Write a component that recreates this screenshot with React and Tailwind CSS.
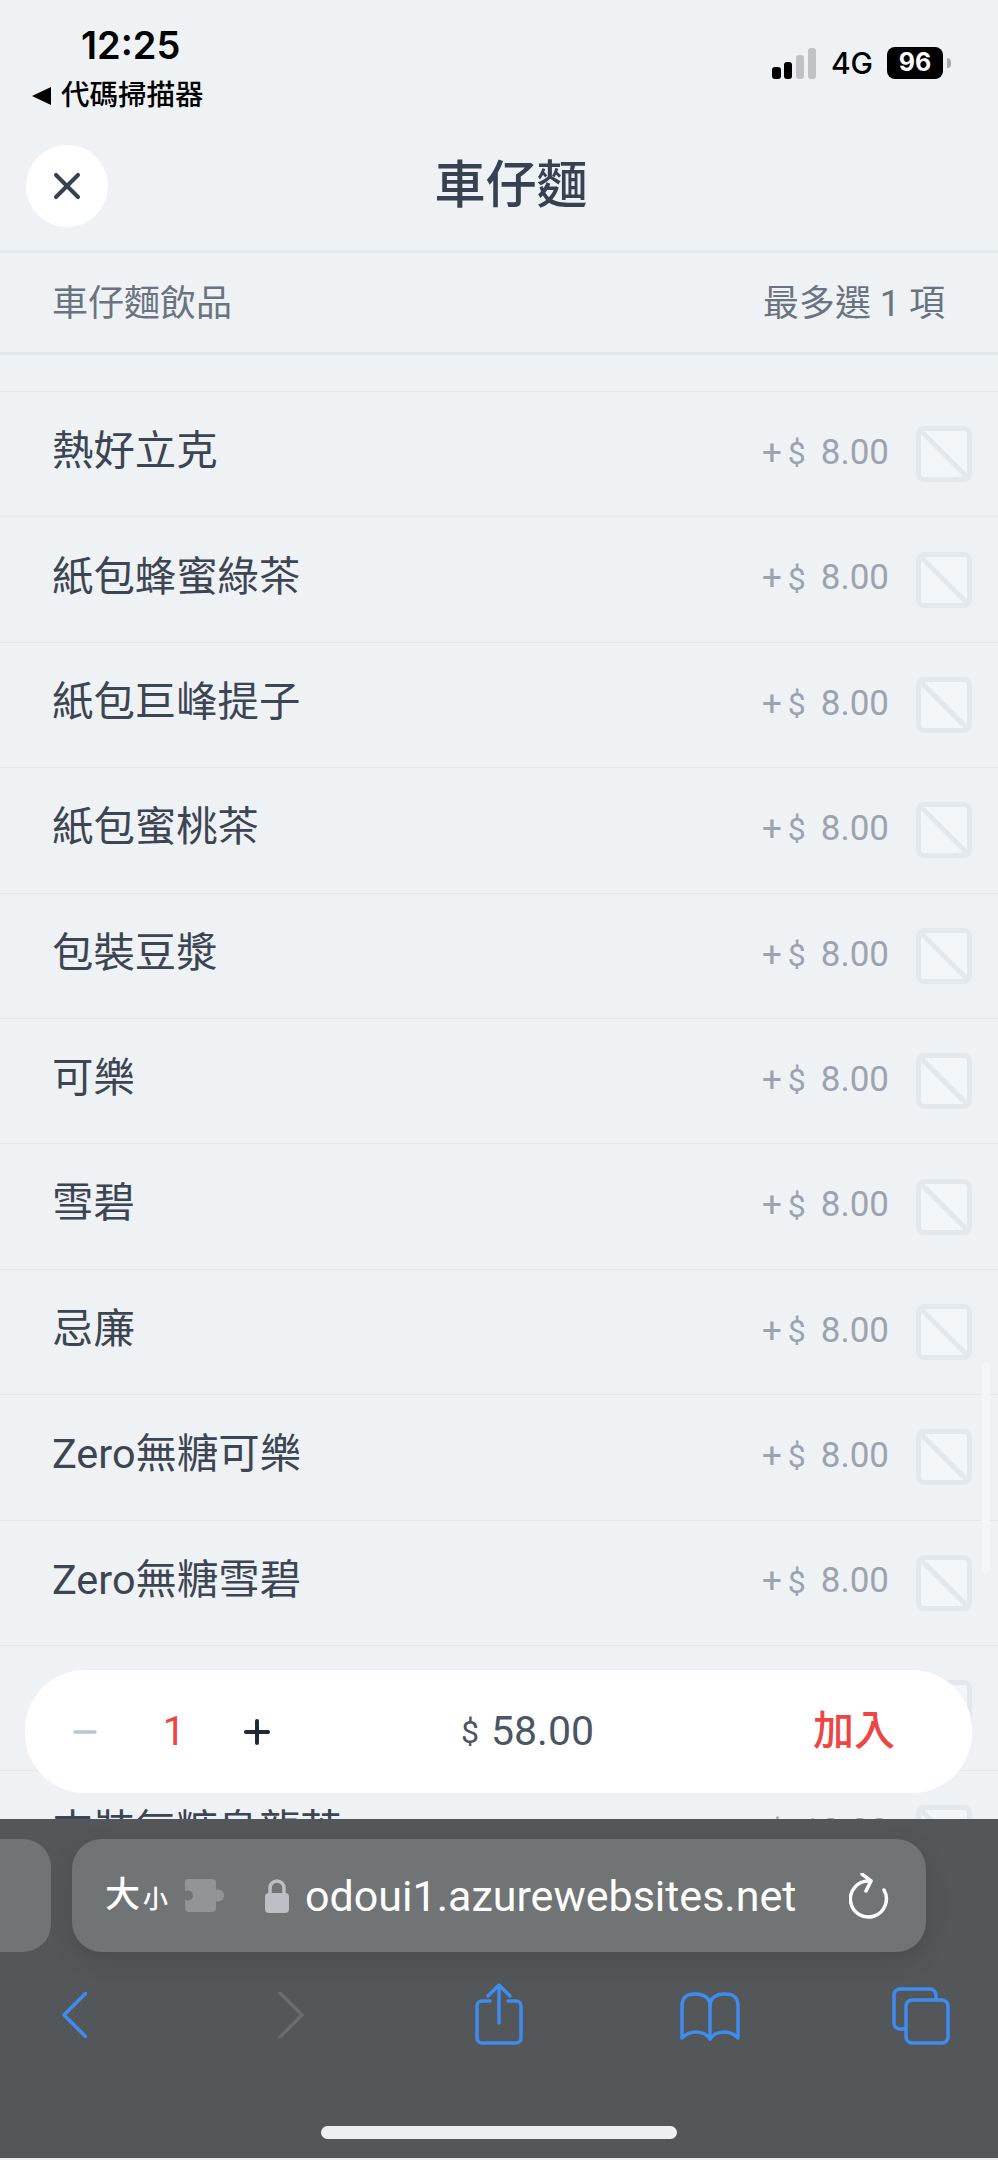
import { X, Plus, Minus } from 'lucide-react'

const cjk = 'font-["Roboto","Noto_Sans_CJK_TC",sans-serif]'

const drinks = [
  { name: '熱好立克', price: '8.00' },
  { name: '紙包蜂蜜綠茶', price: '8.00' },
  { name: '紙包巨峰提子', price: '8.00' },
  { name: '紙包蜜桃茶', price: '8.00' },
  { name: '包裝豆漿', price: '8.00' },
  { name: '可樂', price: '8.00' },
  { name: '雪碧', price: '8.00' },
  { name: '忌廉', price: '8.00' },
  { name: 'Zero無糖可樂', price: '8.00' },
  { name: 'Zero無糖雪碧', price: '8.00' },
  { name: '支裝水', price: '10.00' },
  { name: '支裝無糖烏龍茶', price: '10.00' },
]

function Checkbox() {
  return (
    <span className="h-14 w-14 shrink-0 overflow-hidden rounded-lg border-[5px] border-[#e3e8ec] bg-[#f3f6f9]">
      <svg viewBox="0 0 46 46" className="h-full w-full">
        <path d="M0 0 L46 46" stroke="#e3e8ec" strokeWidth="5" />
      </svg>
    </span>
  )
}

function DrinkRow({ name, price }) {
  return (
    <div className="flex h-[125.4px] items-center border-t border-[#e3e8ec] pl-[52px] pr-[26px]">
      <span className="flex-1 pb-[6px] text-[41.4px] text-[#3d4552]">{name}</span>
      <span className="flex items-center pb-[2px] text-[35px] text-[#9ca3af]">
        <span>+</span>
        <span className="ml-[6px] text-[32px]">$</span>
        <span className="ml-[15px]">{price}</span>
      </span>
      <span className="ml-[27px] flex">
        <Checkbox />
      </span>
    </div>
  )
}

function StatusBar() {
  return (
    <div className="flex h-[131px] shrink-0 items-start justify-between pl-8 pr-[47px]">
      <div className="pt-[23px]">
        <div className='ml-[49px] font-["Inter",sans-serif] text-[38px] font-semibold leading-[44px] text-black'>12:25</div>
        <div className="mt-[11px] flex items-center leading-[36px]">
          <svg width="19" height="18" viewBox="0 0 19 18">
            <path d="M19 0 V18 L0 9 Z" fill="#000" />
          </svg>
          <span className="ml-[10px] text-[28.5px] font-medium text-black">代碼掃描器</span>
        </div>
      </div>
      <div className="flex items-center pt-[47px]">
        <svg width="44" height="32" viewBox="0 0 44 32">
          <rect x="0" y="20" width="9" height="12" rx="3" fill="#000" />
          <rect x="12" y="15" width="8" height="17" rx="3" fill="#000" />
          <rect x="24" y="8" width="8" height="24" rx="3" fill="#bfc3c6" />
          <rect x="36" y="1" width="8" height="31" rx="3" fill="#bfc3c6" />
        </svg>
        <span className='ml-[15px] font-["Inter",sans-serif] text-[30px] font-medium leading-[32px] text-black'>4G</span>
        <span className='ml-[14px] flex h-8 w-14 items-center justify-center rounded-lg bg-black font-["Inter",sans-serif] text-[25px] font-bold text-white'>96</span>
        <span className="ml-1 h-[10px] w-1 rounded-r-full bg-[#a9adb0]" />
      </div>
    </div>
  )
}

function OrderPill() {
  return (
    <div className="absolute left-[25px] top-[1670px] flex h-[123px] w-[947px] items-center rounded-[60px] bg-white">
      <Minus size={34} strokeWidth={2.5} className="ml-[43px] text-[#b5c6d6]" />
      <span className="ml-[60px] w-[24px] text-center text-[40px] text-[#ef4444]">1</span>
      <Plus size={38} strokeWidth={2.5} className="ml-[52px] text-[#1f2937]" />
      <span className="ml-[185px] text-[32px] text-[#4b5563]">$</span>
      <span className="ml-[12px] text-[41px] text-[#4b5563]">58.00</span>
      <span className="ml-[219px] text-[41px] font-medium text-[#ef4444]">加入</span>
    </div>
  )
}

function SafariBar() {
  return (
    <div className="relative h-[341px] shrink-0 bg-[#545759]">
      <div className="flex pt-5">
        <div className="h-[113px] w-[51px] rounded-r-[28px] bg-[#717475]" />
        <div className="ml-[21px] flex h-[113px] w-[854px] items-center rounded-[30px] bg-[#717475] pl-[33px] shadow-[0_8px_24px_rgba(0,0,0,0.12)]">
          <span className="text-[35px] font-medium leading-none text-white">大</span>
          <span className="ml-[3px] mt-2 text-[25px] font-medium leading-none text-white">小</span>
          <svg width="39" height="33" viewBox="0 0 39 33" className="ml-[17px]">
            <rect x="0" y="0" width="31" height="33" rx="4" fill="#929497" />
            <circle cx="33" cy="16.5" r="6" fill="#929497" />
            <circle cx="3" cy="16.5" r="5" fill="#717475" />
          </svg>
          <svg width="24" height="34" viewBox="0 0 24 34" className="ml-[41px]">
            <path d="M5 15 V9 a7 7 0 0 1 14 0 V15" fill="none" stroke="#bcbec4" strokeWidth="3.5" />
            <rect x="0" y="14" width="24" height="20" rx="4" fill="#bcbec4" />
          </svg>
          <span className="ml-[16px] mt-[2px] text-[43px] leading-none text-white">odoui1.azurewebsites.net</span>
          <svg width="40" height="46" viewBox="0 0 40 46" className="ml-[53px]" fill="none" stroke="#fff" strokeWidth="3.5" strokeLinecap="round" strokeLinejoin="round">
            <path d="M20 8 A18 18 0 1 0 35 17" />
            <path d="M13 1 L22 8 L17 18" />
          </svg>
        </div>
      </div>
      <div className="mt-[31px] flex items-start justify-between pl-[62px] pr-[48px]">
        <svg width="25" height="46" viewBox="0 0 25 46" className="mt-[9px]" fill="none" stroke="#3f8cf0" strokeWidth="3.5" strokeLinecap="round" strokeLinejoin="round">
          <path d="M24 1 L2 23 L24 45" />
        </svg>
        <svg width="26" height="46" viewBox="0 0 26 46" className="ml-[191px] mt-[9px]" fill="none" stroke="#6a6d70" strokeWidth="3.5" strokeLinecap="round" strokeLinejoin="round">
          <path d="M2 1 L24 23 L2 45" />
        </svg>
        <svg width="48" height="62" viewBox="0 0 48 62" className="ml-[171px]" fill="none" stroke="#3f8cf0" strokeWidth="3.5" strokeLinecap="round" strokeLinejoin="round">
          <path d="M15 18 H7 a5 5 0 0 0 -5 5 V55 a5 5 0 0 0 5 5 H41 a5 5 0 0 0 5 -5 V23 a5 5 0 0 0 -5 -5 H33" />
          <path d="M24 40 V2 M13 13 L24 2 L35 13" />
        </svg>
        <svg width="60" height="50" viewBox="0 0 60 50" className="ml-[157px] mt-[9px]" fill="none" stroke="#3f8cf0" strokeWidth="3.5" strokeLinejoin="round" strokeLinecap="round">
          <path d="M2 46 V14 C2 4 8 2 15 2 C24 2 30 6 30 14 C30 6 36 2 45 2 C52 2 58 4 58 14 V46 C50 38 36 38 30 47 C24 38 10 38 2 46 Z" />
          <path d="M30 14 V47" />
        </svg>
        <svg width="58" height="58" viewBox="0 0 58 58" className="ml-[152px] mt-[4px]" fill="none" stroke="#3f8cf0" strokeWidth="3.5" strokeLinejoin="round">
          <path d="M44 12 V8 a6 6 0 0 0 -6 -6 H8 a6 6 0 0 0 -6 6 V36 a6 6 0 0 0 6 6 H14" />
          <rect x="14" y="13" width="42" height="43" rx="6" />
        </svg>
      </div>
      <div className="absolute bottom-[21px] left-[321px] h-[13px] w-[356px] rounded-full bg-[#eeeff0]" />
      <div className="absolute inset-x-0 bottom-0 h-[2px] bg-[#eceef0]" />
    </div>
  )
}

export default function App() {
  return (
    <div className={`relative flex h-[2160px] w-[998px] flex-col overflow-hidden bg-[#eef2f5] ${cjk}`}>
      <StatusBar />
      <div className="relative flex h-[122px] shrink-0 items-center justify-center border-b-[3px] border-[#e3e8ec] pb-[8px] pl-[24px]">
        <button className="absolute left-[26px] top-[14px] flex h-[82px] w-[82px] items-center justify-center rounded-full bg-white">
          <X size={44} strokeWidth={2.2} className="text-[#374151]" />
        </button>
        <h1 className="text-[51px] font-medium text-[#374151]">車仔麵</h1>
      </div>
      <div className="flex h-[102px] shrink-0 items-center justify-between border-b-[3px] border-[#e3e8ec] pl-[52px] pr-[53px] pt-[3px] text-[36px] text-[#6b7280]">
        <span>車仔麵飲品</span>
        <span>最多選 1 項</span>
      </div>
      <div className="min-h-0 flex-1 overflow-hidden pt-[36px]">
        {drinks.map((item) => (
          <DrinkRow key={item.name} name={item.name} price={item.price} />
        ))}
      </div>
      <div className="absolute left-[982px] top-[1362px] h-[211px] w-2 rounded-full bg-[#f3f6f9]" />
      <OrderPill />
      <SafariBar />
    </div>
  )
}
